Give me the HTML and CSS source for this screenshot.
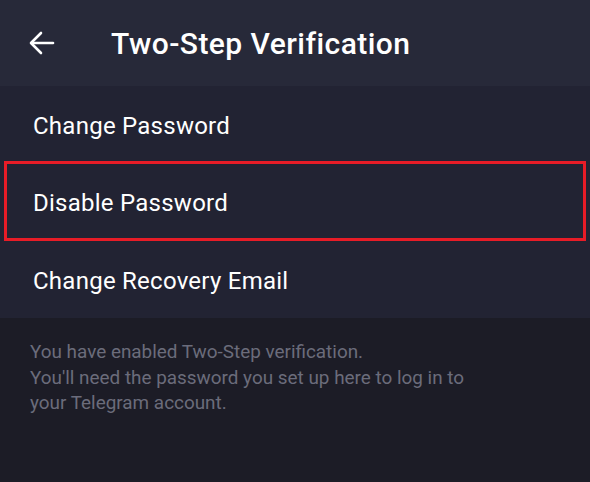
FILE: index.html
```html
<!DOCTYPE html>
<html lang="en">
<head>
    <meta charset="UTF-8">
    <meta name="viewport" content="width=device-width, initial-scale=1.0">
    <title>Two-Step Verification</title>
    <link rel="stylesheet" href="styles.css">
</head>
<body>
    <header class="top-bar">
        <button class="back-btn" aria-label="Back">
            <svg width="26" height="24" viewBox="0 0 26 24" fill="none" stroke="#fff" stroke-width="2.6" stroke-linecap="round" stroke-linejoin="round">
                <path d="M24 12H3"/>
                <path d="M12 2L2 12l10 10"/>
            </svg>
        </button>
        <h1>Two-Step Verification</h1>
    </header>

    <ul class="options">
        <li>Change Password</li>
        <li class="highlight">Disable Password</li>
        <li>Change Recovery Email</li>
    </ul>

    <p class="info">You have enabled Two-Step verification.<br>You'll need the password you set up here to log in to your Telegram account.</p>
</body>
</html>
```

FILE: styles.css
```css
body {
    font-family: Roboto, "Noto Sans", sans-serif;
    background: #1c1c26;
    margin: 0;
    width: 590px;
    height: 482px;
    overflow: hidden;
}
.top-bar {
    background: #272939;
    height: 86px;
    display: flex;
    align-items: center;
    padding-left: 29px;
    box-sizing: border-box;
}
.back-btn {
    background: none;
    border: none;
    padding: 0;
    width: 26px;
    height: 24px;
    display: flex;
    cursor: pointer;
}
h1 {
    color: #fff;
    font-size: 30px;
    font-weight: 500;
    margin: 0 0 0 56px;
    letter-spacing: 0.45px;
}
.options {
    list-style: none;
    margin: 0;
    padding: 0;
    background: #222333;
}
.options li {
    height: 77px;
    display: flex;
    align-items: center;
    padding: 2px 0 0 33px;
    color: #fff;
    font-size: 24px;
    letter-spacing: 0.25px;
    box-sizing: border-box;
}
.options li:first-child {
    height: 78px;
}
.options li.highlight {
    height: 80px;
    margin: -3px 4px 0;
    padding: 4px 0 0 26px;
    border: 3px solid #e81c27;
}
.info {
    margin: 0;
    padding: 21px 100px 0 30px;
    color: #6b6c7b;
    font-size: 18.9px;
    line-height: 25.5px;
}
```
